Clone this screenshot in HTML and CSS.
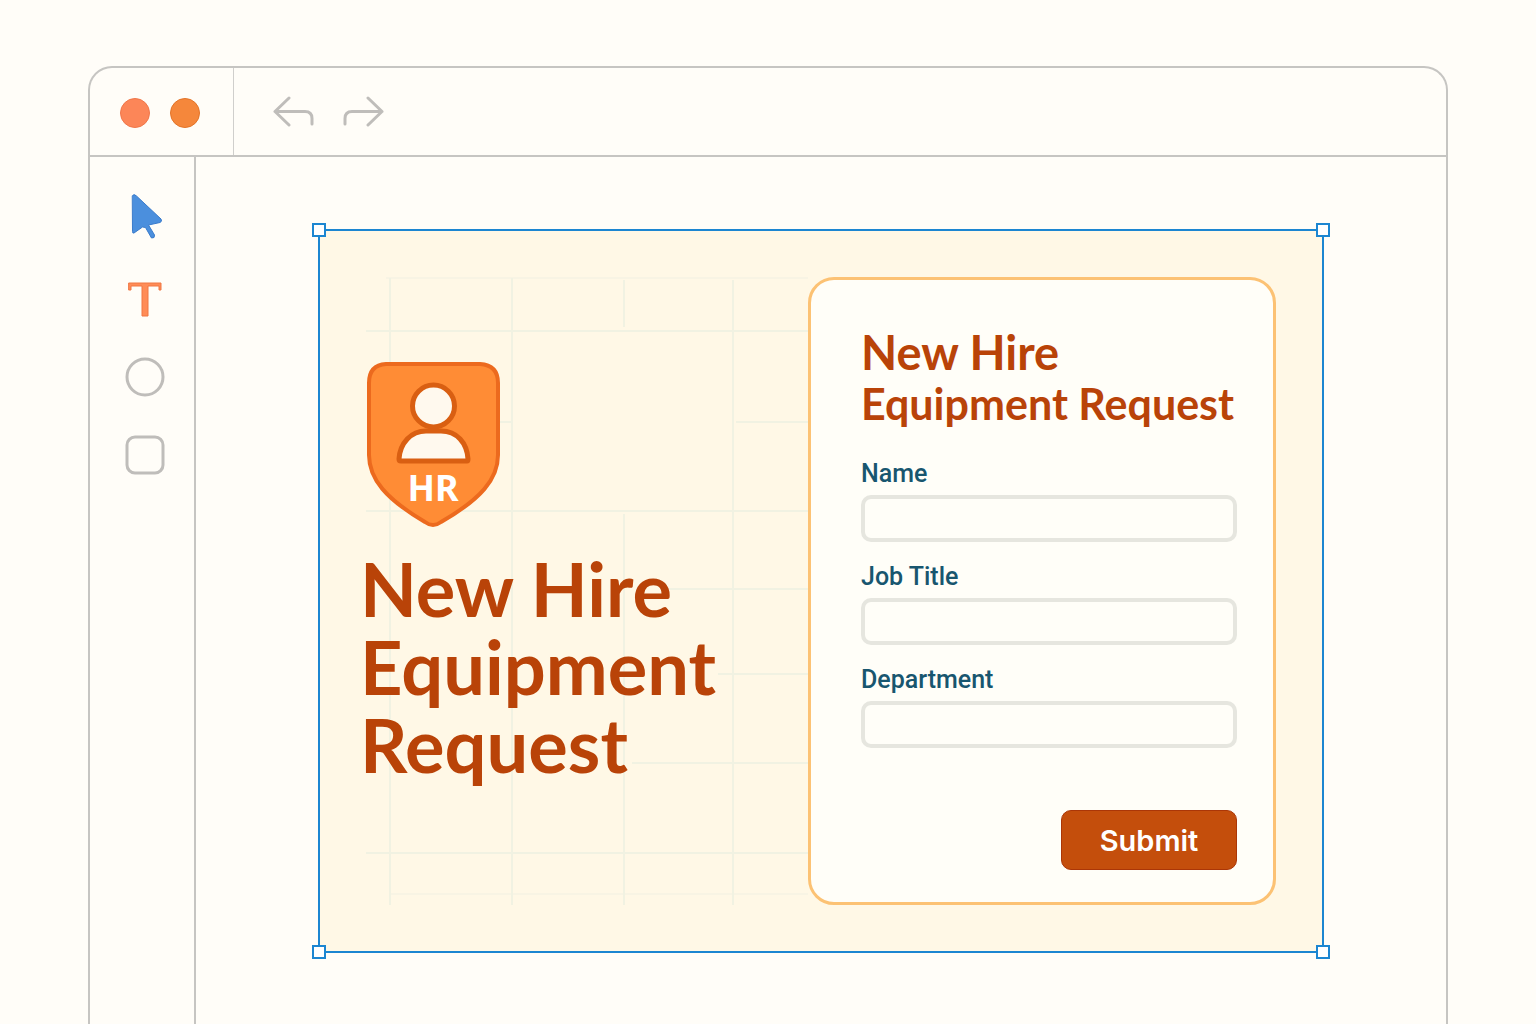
FILE: index.html
```
<!DOCTYPE html>
<html lang="en">
<head>
    <meta charset="UTF-8">
    <meta name="viewport" content="width=device-width, initial-scale=1.0">
    <title>New Hire Equipment Request</title>
    <link rel="stylesheet" href="styles.css">
</head>
<body>
    <div class="window">
        <header class="titlebar">
            <div class="window-dots">
                <span class="dot dot-coral"></span>
                <span class="dot dot-orange"></span>
            </div>
            <div class="history">
                <button type="button" class="icon-button" aria-label="Undo">
                    <svg width="42" height="32" viewBox="0 0 42 32">
                        <path d="M16 2 L2 15.500 L16 29 M2 15.500 H32 Q39 15.500 39 22.500 V28"/>
                    </svg>
                </button>
                <button type="button" class="icon-button" aria-label="Redo">
                    <svg width="42" height="32" viewBox="0 0 42 32">
                        <path d="M25 2 L39 15.500 L25 29 M39 15.500 H9 Q2 15.500 2 22.500 V28"/>
                    </svg>
                </button>
            </div>
        </header>

        <div class="workspace">
            <!-- Tools -->
            <nav class="toolbar" aria-label="Tools">
                <button type="button" class="icon-button" aria-label="Select">
                    <svg width="40" height="48" viewBox="0 0 40 48">
                        <path class="cursor" d="M7.500 2.500 Q9 0.500 11.500 3 L36 26 Q37.500 28.500 35 29.500 L23.500 32 L29.500 42 Q30 45.500 26.500 45 L20.500 34.500 L17.500 34 L9 40 Q7.500 40.500 7.500 39 Z"/>
                    </svg>
                </button>
                <button type="button" class="icon-button" aria-label="Text">
                    <svg width="40" height="40" viewBox="0 0 40 40">
                        <path class="text-tool" d="M4 4 H36 V11 H34 V7 H23 V37 H17 V7 H6 V11 H4 Z"/>
                    </svg>
                </button>
                <button type="button" class="icon-button" aria-label="Ellipse">
                    <svg width="40" height="40" viewBox="0 0 40 40">
                        <circle class="shape" cx="20" cy="20" r="18"/>
                    </svg>
                </button>
                <button type="button" class="icon-button" aria-label="Rectangle">
                    <svg width="40" height="40" viewBox="0 0 40 40">
                        <rect class="shape" x="2" y="2" width="36" height="36" rx="8"/>
                    </svg>
                </button>
            </nav>

            <main class="canvas">
                <div class="artboard">
                    <section class="hero">
                        <svg class="hero-grid" viewBox="0 0 442 628" preserveAspectRatio="none" aria-hidden="true">
                            <path class="faint" d="M20 1 H442 M24 617 H442"/>
                            <path d="M0 54 H442 M0 234 H442 M370 145 H442 M134 145 H146 M300 312 H442 M352 397 H442 M266 486 H442 M0 576 H442"/>
                            <path d="M24 1 V628 M146 1 V628 M258 3 V50 M258 237 V628 M367 3 V628"/>
                        </svg>
                        <svg class="badge" width="142" height="168" viewBox="0 0 142 168" role="img" aria-label="HR">
                            <path class="shield" d="M26 4 H120 Q138 5 138 23 V95 C138 119 121 139 81 162 Q73 168 65 162 C26 139 9 119 9 95 V23 Q9 5 26 4 Z"/>
                            <circle class="person" cx="73.500" cy="46" r="21"/>
                            <path class="person" d="M41 101 Q39 101 39 99 C40 83 51 71 66 71 H81 C97 71 107 83 108 99 Q108 101 107 101 Z"/>
                            <text class="badge-text" x="73" y="141" text-anchor="middle">HR</text>
                        </svg>
                        <h1 class="hero-title">New Hire<br>Equipment<br>Request</h1>
                    </section>

                    <form class="card">
                        <h2 class="card-title">New Hire <span class="card-subtitle">Equipment Request</span></h2>
                        <div class="field">
                            <label for="name">Name</label>
                            <input type="text" id="name">
                        </div>
                        <div class="field">
                            <label for="job-title">Job Title</label>
                            <input type="text" id="job-title">
                        </div>
                        <div class="field">
                            <label for="department">Department</label>
                            <input type="text" id="department">
                        </div>
                        <button type="button" class="submit">Submit</button>
                    </form>

                    <!-- Selection handles -->
                    <span class="handle top left"></span>
                    <span class="handle top right"></span>
                    <span class="handle bottom left"></span>
                    <span class="handle bottom right"></span>
                </div>
            </main>
        </div>
    </div>
</body>
</html>
```
FILE: styles.css
```
* {
    box-sizing: border-box;
}
body {
    display: flex;
    flex-direction: column;
    min-height: 100vh;
    margin: 0;
    padding: 66px 88px 0;
    background: #fffdf8;
    font-family: Roboto, sans-serif;
}
h1,
h2 {
    margin: 0;
    font-family: Lato, sans-serif;
    font-weight: 700;
    color: #b94308;
}
.window {
    flex: 1;
    display: flex;
    flex-direction: column;
    border: 2px solid #c6c5c2;
    border-bottom: none;
    border-radius: 24px 24px 0 0;
}

/* Title bar */
.titlebar {
    display: flex;
    height: 89px;
    border-bottom: 2px solid #c6c5c2;
}
.window-dots {
    display: flex;
    align-items: center;
    gap: 20px;
    width: 144px;
    padding-left: 30px;
    padding-top: 3px;
    border-right: 1px solid #d0cfcc;
}
.dot {
    width: 30px;
    height: 30px;
    border-radius: 50%;
}
.dot-coral {
    background: #fc8658;
    border: 1px solid #f0774a;
}
.dot-orange {
    background: #f5873b;
    border: 1px solid #e37428;
}
.history {
    display: flex;
    align-items: center;
    gap: 28px;
    padding-left: 39px;
}
.icon-button {
    display: block;
    padding: 0;
    border: none;
    background: none;
    cursor: pointer;
}
.icon-button svg {
    display: block;
    fill: none;
    stroke: #bfbdba;
    stroke-width: 3;
    stroke-linecap: round;
    stroke-linejoin: round;
}

/* Toolbar */
.workspace {
    flex: 1;
    display: flex;
}
.toolbar {
    display: flex;
    flex-direction: column;
    align-items: center;
    gap: 38px;
    width: 106px;
    padding-top: 36px;
    padding-left: 6px;
    border-right: 2px solid #c6c5c2;
}
.icon-button .cursor {
    fill: #4b8fdd;
    stroke: #3a7bcb;
    stroke-width: 1;
}
.icon-button .text-tool {
    fill: #ff8c57;
    stroke: #f07743;
    stroke-width: 1;
    stroke-linejoin: miter;
}

/* Canvas */
.canvas {
    flex: 1;
    padding: 72px 122px 71px;
}
.artboard {
    position: relative;
    display: flex;
    padding: 46px;
    padding-left: 40px;
    border: 2px solid #1c86d1;
    background: #fff8e6;
}
.handle {
    position: absolute;
    width: 14px;
    height: 14px;
    border: 2px solid #1c86d1;
    background: #fff;
}
.top {
    top: -8px;
}
.bottom {
    bottom: -8px;
}
.left {
    left: -8px;
}
.right {
    right: -8px;
}

/* Left side of the artboard */
.hero {
    position: relative;
    flex: 1;
    padding-top: 83px;
}
.hero-grid {
    position: absolute;
    top: 0;
    left: 6px;
    width: calc(100% - 6px);
    height: 100%;
    fill: none;
    stroke: #f1f2e2;
    stroke-width: 2;
}
.hero-grid .faint {
    stroke: #f8f4e4;
}
.badge {
    position: relative;
    display: block;
}
.shield {
    fill: #ff8c35;
    stroke: #ec6a1e;
    stroke-width: 4;
}
.person {
    fill: #fff9ee;
    stroke: #d95f12;
    stroke-width: 5;
}
.badge-text {
    fill: #fff;
    font: 700 36px "Noto Sans", sans-serif;
}
.hero-title {
    position: relative;
    margin-top: 22px;
    font-size: 74px;
    line-height: 78px;
}

/* Request form */
.card {
    display: flex;
    flex-direction: column;
    width: 468px;
    padding: 46px 36px 32px 50px;
    border: 3px solid #fcc274;
    border-radius: 26px;
    background: #fffef8;
}
.card-title {
    margin-bottom: 29px;
    font-size: 47px;
    line-height: 52px;
}
.card-subtitle {
    display: block;
    font-size: 43px;
    white-space: nowrap;
}
.field {
    margin-bottom: 20px;
}
.field label {
    display: block;
    margin-bottom: 6px;
    font-size: 25px;
    font-weight: 500;
    line-height: 30px;
    color: #18566f;
}
.field input {
    display: block;
    width: 100%;
    height: 47px;
    padding: 0 12px;
    border: 4px solid #e6e6df;
    border-radius: 10px;
    background: #fffef8;
    font-family: inherit;
    font-size: 25px;
}
.submit {
    align-self: flex-end;
    width: 176px;
    height: 60px;
    margin-top: 42px;
    border: 1px solid #ab3607;
    border-radius: 10px;
    background: #c44e0c;
    color: #fff;
    font-family: Inter, sans-serif;
    font-size: 29px;
    font-weight: 600;
    cursor: pointer;
}
```
